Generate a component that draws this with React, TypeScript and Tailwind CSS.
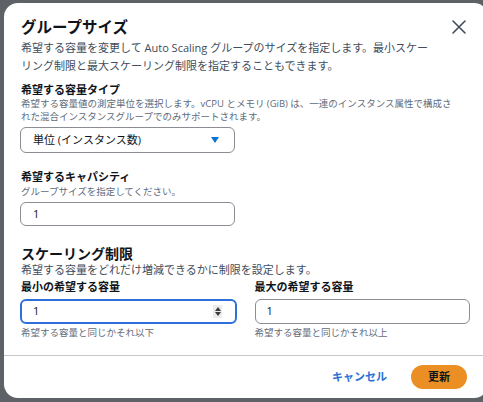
import React from "react";

const font = { fontFamily: '"Open Sans", "Noto Sans CJK JP", sans-serif' };

function Label({ children, className = "" }: { children: React.ReactNode; className?: string }) {
  return <p className={"text-[11px] leading-[14px] font-bold text-[#0f141a] " + className}>{children}</p>;
}

function Hint({ children, className = "" }: { children: React.ReactNode; className?: string }) {
  return <p className={"text-[9.5px] leading-[13px] text-[#5f6b7a] " + className}>{children}</p>;
}

export default function App() {
  return (
    <div style={font} className="w-[483px] h-[402px] overflow-hidden bg-[#5e6166] pt-[3px] pl-[4px]">
      <div className="w-[484px] h-[395px] rounded-[14px] bg-white flex flex-col">
        <div className="pl-[17px] pr-[16px] pt-[14px]">
          <div className="flex items-start justify-between">
            <h1 className="text-[15.5px] leading-[20px] font-bold text-[#0f141a]">グループサイズ</h1>
            <svg width="14" height="14" viewBox="0 0 14 14" className="mt-[3px] mr-[6px]">
              <path d="M1 1 L13 13 M13 1 L1 13" stroke="#414d5c" strokeWidth="1.6" strokeLinecap="round" />
            </svg>
          </div>
          <p className="mt-[2px] text-[11px] leading-[18px] text-[#414d5c] pr-[40px]">
            希望する容量を変更して Auto Scaling グループのサイズを指定します。最小スケーリング制限と最大スケーリング制限を指定することもできます。
          </p>

          <Label className="mt-[8px]">希望する容量タイプ</Label>
          <Hint className="pr-[14px]">
            希望する容量値の測定単位を選択します。vCPU とメモリ (GiB) は、一連のインスタンス属性で構成された混合インスタンスグループでのみサポートされます。
          </Hint>
          <div className="mt-[4px] w-[215px] h-[26px] rounded-[6px] border border-[#8c8c94] flex items-center justify-between pl-[12px] pr-[15px] -ml-[1px]">
            <span className="text-[11px] text-[#0f141a]">単位 (インスタンス数)</span>
            <svg width="8" height="6" viewBox="0 0 8 6">
              <path d="M0 0 H8 L4 6 Z" fill="#0972d3" />
            </svg>
          </div>

          <Label className="mt-[17px]">希望するキャパシティ</Label>
          <Hint className="mt-[1px]">グループサイズを指定してください。</Hint>
          <div className="mt-[4px] w-[215px] h-[24px] rounded-[6px] border border-[#8c8c94] flex items-center pl-[12px] -ml-[1px]">
            <span className="text-[11px] text-[#0f141a]">1</span>
          </div>

          <h2 className="mt-[19px] text-[14px] leading-[18px] font-bold text-[#0f141a]">スケーリング制限</h2>
          <p className="text-[11px] leading-[14px] text-[#414d5c]">希望する容量をどれだけ増減できるかに制限を設定します。</p>

          <div className="mt-[3px] grid grid-cols-2 gap-[16px]">
            <div>
              <Label>最小の希望する容量</Label>
              <div className="mt-[5px] w-[217px] h-[25px] rounded-[6px] border-2 border-[#2f6fdc] flex items-center justify-between pl-[11px] pr-[13px] -ml-[1px]">
                <span className="text-[11px] text-[#0f141a]">1</span>
                <div className="w-[9px] h-[13px] bg-[#ececec] flex flex-col items-center justify-center gap-[1px]">
                  <svg width="6" height="4" viewBox="0 0 6 4"><path d="M0 4 L3 0 L6 4 Z" fill="#3c3c3c" /></svg>
                  <svg width="6" height="4" viewBox="0 0 6 4"><path d="M0 0 H6 L3 4 Z" fill="#3c3c3c" /></svg>
                </div>
              </div>
              <Hint className="mt-[2px] leading-[12px]">希望する容量と同じかそれ以下</Hint>
            </div>
            <div>
              <Label>最大の希望する容量</Label>
              <div className="mt-[5px] w-[215px] h-[25px] rounded-[6px] border border-[#8c8c94] flex items-center pl-[11px]">
                <span className="text-[11px] text-[#0f141a]">1</span>
              </div>
              <Hint className="mt-[2px] leading-[12px]">希望する容量と同じかそれ以上</Hint>
            </div>
          </div>
        </div>

        <div className="mt-[16px] border-t border-[#c6c6cd]" />
        <div className="flex items-center justify-end gap-[24px] pr-[21px] pt-[9px]">
          <span className="text-[11px] font-bold text-[#2b6fd6]">キャンセル</span>
          <div className="w-[56px] h-[24px] rounded-full bg-[#eb8f24] flex items-center justify-center text-[11px] font-bold text-[#0f141a]">
            更新
          </div>
        </div>
      </div>
    </div>
  );
}
